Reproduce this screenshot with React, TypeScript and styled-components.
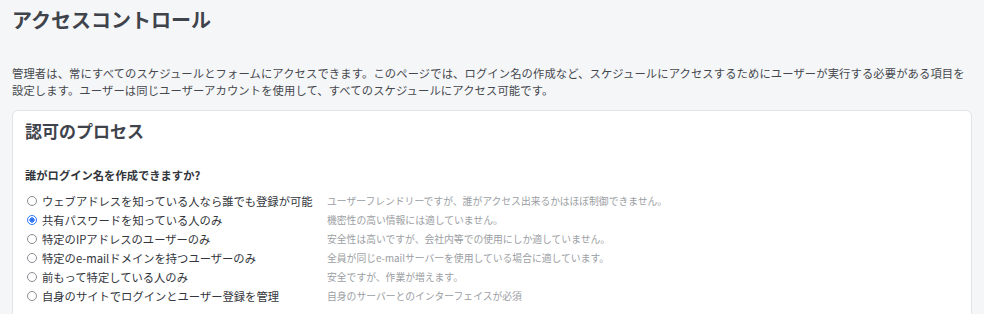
import * as React from "react";
import styled, { createGlobalStyle } from "styled-components";

const GlobalStyle = createGlobalStyle`
  body {
    margin: 0;
    background: #f5f6f8;
    font-family: "Noto Sans CJK JP", "Noto Sans", sans-serif;
    color: #3a3d44;
  }
`;

const Page = styled.div`
  padding: 6px 12px 0;
`;

const Title = styled.h1`
  margin: 0;
  font-size: 20px;
  line-height: 28px;
  font-weight: 700;
  color: #3f434b;
`;

const Intro = styled.p`
  margin: 30.5px 0 11.5px;
  font-size: 11.3px;
  letter-spacing: 0.12px;
  line-height: 17px;
  color: #45484e;
`;

const Card = styled.section`
  background: #fff;
  border: 1px solid #e2e4e8;
  border-radius: 6px;
  padding: 8px 12px 20px;
  min-height: 240px;
`;

const CardTitle = styled.h2`
  margin: 0;
  font-size: 17px;
  line-height: 24px;
  font-weight: 700;
  color: #3f434b;
`;

const Question = styled.h3`
  margin: 24px 0 8.5px;
  font-size: 11.3px;
  line-height: 16px;
  font-weight: 700;
  color: #33363c;
`;

const OptionList = styled.div`
  display: flex;
  flex-direction: column;
`;

const OptionRow = styled.label`
  display: grid;
  grid-template-columns: 302px 1fr;
  align-items: center;
  height: 19px;
`;

const OptionLabel = styled.span`
  display: flex;
  align-items: center;
  gap: 5px;
  padding-left: 2px;
  font-size: 11.3px;
  color: #33363c;
  white-space: nowrap;
`;

const Radio = styled.input.attrs({ type: "radio" })`
  appearance: none;
  width: 10px;
  height: 10px;
  margin: 0;
  border: 1px solid #8a8d92;
  border-radius: 50%;
  background: #fff;
  flex: none;

  &:checked {
    border-color: #3478f6;
    background: radial-gradient(circle, #3478f6 0 2.4px, #fff 2.9px);
  }
`;

const Hint = styled.span`
  font-size: 9.8px;
  color: #9b9ea3;
  white-space: nowrap;
`;

const options = [
  {
    label: "ウェブアドレスを知っている人なら誰でも登録が可能",
    hint: "ユーザーフレンドリーですが、誰がアクセス出来るかはほぼ制御できません。",
  },
  {
    label: "共有パスワードを知っている人のみ",
    hint: "機密性の高い情報には適していません。",
  },
  {
    label: "特定のIPアドレスのユーザーのみ",
    hint: "安全性は高いですが、会社内等での使用にしか適していません。",
  },
  {
    label: "特定のe-mailドメインを持つユーザーのみ",
    hint: "全員が同じe-mailサーバーを使用している場合に適しています。",
  },
  {
    label: "前もって特定している人のみ",
    hint: "安全ですが、作業が増えます。",
  },
  {
    label: "自身のサイトでログインとユーザー登録を管理",
    hint: "自身のサーバーとのインターフェイスが必須",
  },
];

export default function App() {
  const [selected, setSelected] = React.useState(1);

  return (
    <>
      <GlobalStyle />
      <Page>
        <Title>アクセスコントロール</Title>
        <Intro>
          管理者は、常にすべてのスケジュールとフォームにアクセスできます。このページでは、ログイン名の作成など、スケジュールにアクセスするためにユーザーが実行する必要がある項目を設定します。ユーザーは同じユーザーアカウントを使用して、すべてのスケジュールにアクセス可能です。
        </Intro>
        <Card>
          <CardTitle>認可のプロセス</CardTitle>
          <Question>誰がログイン名を作成できますか?</Question>
          <OptionList>
            {options.map((o, i) => (
              <OptionRow key={o.label}>
                <OptionLabel>
                  <Radio
                    name="auth"
                    checked={selected === i}
                    onChange={() => setSelected(i)}
                  />
                  {o.label}
                </OptionLabel>
                <Hint>{o.hint}</Hint>
              </OptionRow>
            ))}
          </OptionList>
        </Card>
      </Page>
    </>
  );
}
